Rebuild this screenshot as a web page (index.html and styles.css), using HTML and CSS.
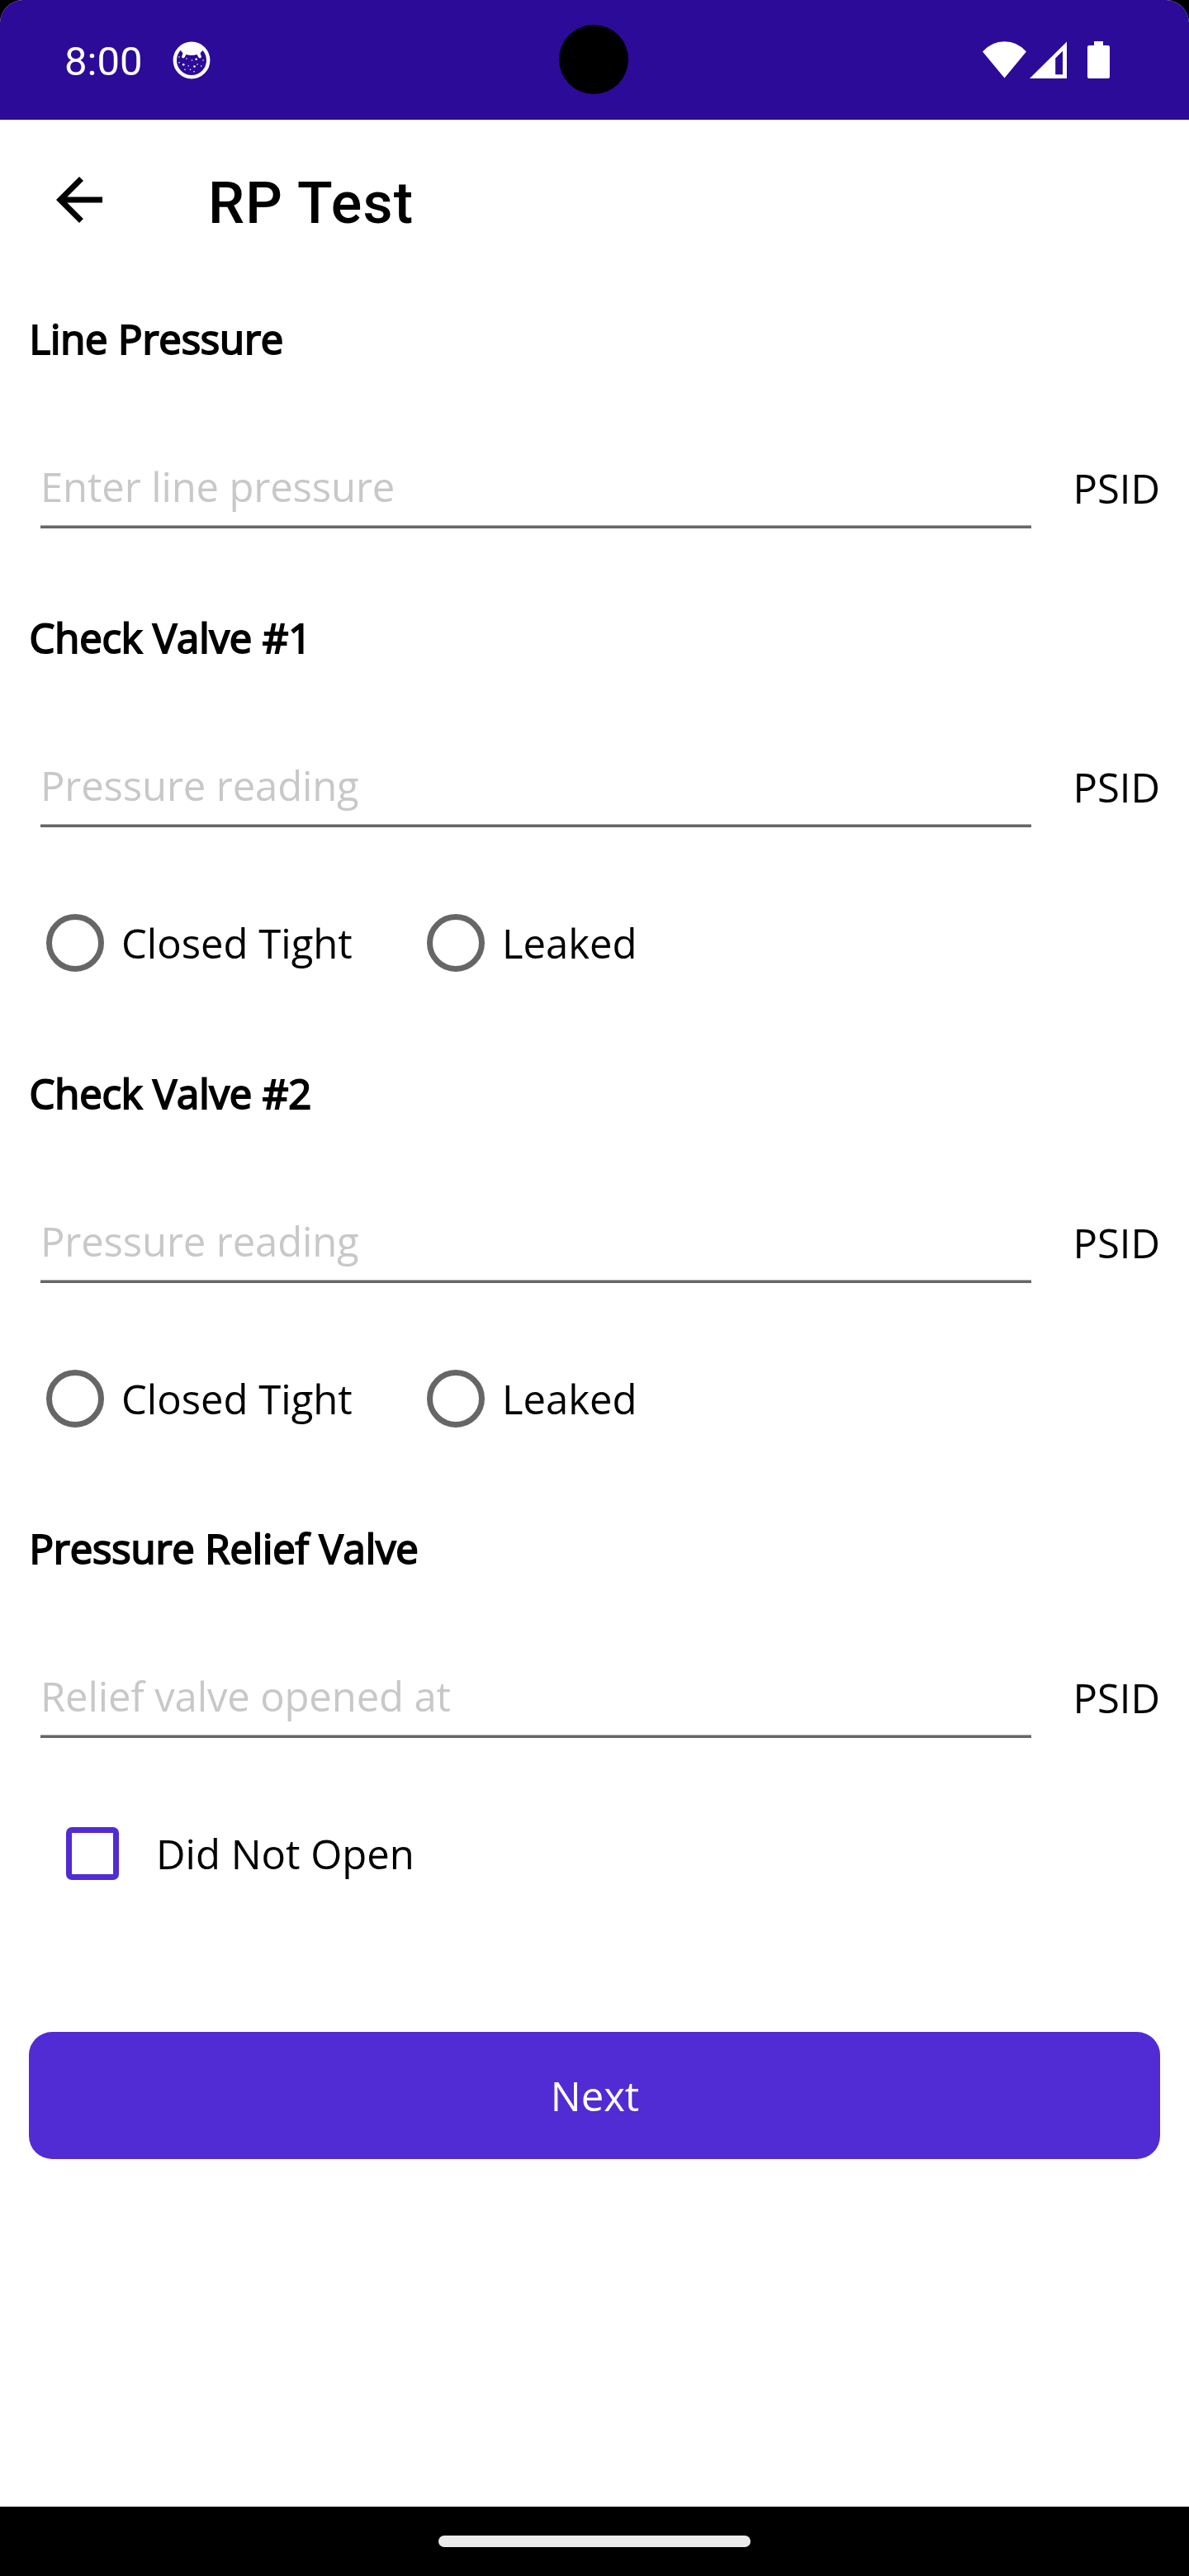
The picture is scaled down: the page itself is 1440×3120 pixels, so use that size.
FILE: index.html
```html
<!DOCTYPE html>
<html lang="en">
<head>
<meta charset="utf-8">
<title>RP Test</title>
<link rel="stylesheet" href="styles.css">
</head>
<body>
<div class="screen">
  <header class="status">
    <span class="clock">8:00</span>
    <svg class="notice" viewBox="0 0 46 46" width="46" height="46">
      <circle cx="23" cy="23" r="20.2" fill="none" stroke="#fff" stroke-width="4.4"/>
      <path d="M6 9Q13 1 23 1T40 9L36 11.500L33.500 14.500L35 19Q33.500 21.500 31.500 19.500L29.500 16Q23 18 16.500 16L14.500 19.500Q12.500 21.500 11 19L12.500 14.500L9 10Z" fill="#fff"/>
      <g fill="#fff">
        <circle cx="28.700" cy="21.700" r="1.300"/><circle cx="13.200" cy="28.300" r="1.300"/><circle cx="26.500" cy="30.500" r="1.300"/>
        <circle cx="8" cy="19" r=".8"/><circle cx="8" cy="25.700" r=".8"/><circle cx="17" cy="21" r=".8"/><circle cx="23.500" cy="23" r=".8"/>
        <circle cx="19.300" cy="29.700" r=".8"/><circle cx="15" cy="34.300" r=".8"/><circle cx="21.500" cy="34.300" r=".8"/><circle cx="26" cy="36.700" r=".8"/>
        <circle cx="30" cy="28" r=".8"/><circle cx="34.700" cy="30" r=".8"/><circle cx="37" cy="23" r=".8"/>
      </g>
    </svg>
    <span class="camera"></span>
    <svg class="signals" viewBox="0 0 156 46" width="156" height="46" fill="#fff">
      <path d="M0 12.500Q11 .3 26.500 .3T53 12.500L26.500 44.500Z"/>
      <path fill-rule="evenodd" d="M57 45L102 .5V45ZM88.200 20.500V40.300H97V11.700Z"/>
      <path d="M135 0H146V5H152Q154 5 154 7V43Q154 45 152 45H129Q127 45 127 43V7Q127 5 129 5H135Z"/>
    </svg>
  </header>
  <div class="appbar">
    <svg class="back" viewBox="0 0 16 16" width="56" height="56"><path d="M16 7H3.830L9.420 1.410L8 0L0 8L8 16L9.410 14.590L3.830 9H16Z"/></svg>
    <h1 class="title">RP Test</h1>
  </div>
  <main class="form">
    <section class="group">
      <h2 class="heading">Line Pressure</h2>
      <div class="field"><input class="entry" type="text" placeholder="Enter line pressure"><span class="unit">PSID</span></div>
    </section>
    <section class="group">
      <h2 class="heading">Check Valve #1</h2>
      <div class="field"><input class="entry" type="text" placeholder="Pressure reading"><span class="unit">PSID</span></div>
      <div class="options">
        <label class="option closed"><input class="radio" type="radio" name="valve1">Closed Tight</label>
        <label class="option"><input class="radio" type="radio" name="valve1">Leaked</label>
      </div>
    </section>
    <section class="group">
      <h2 class="heading">Check Valve #2</h2>
      <div class="field"><input class="entry" type="text" placeholder="Pressure reading"><span class="unit">PSID</span></div>
      <div class="options">
        <label class="option closed"><input class="radio" type="radio" name="valve2">Closed Tight</label>
        <label class="option"><input class="radio" type="radio" name="valve2">Leaked</label>
      </div>
    </section>
    <section class="group">
      <h2 class="heading">Pressure Relief Valve</h2>
      <div class="field"><input class="entry" type="text" placeholder="Relief valve opened at"><span class="unit">PSID</span></div>
      <label class="check"><input class="box" type="checkbox">Did Not Open</label>
    </section>
    <button class="next" type="button">Next</button>
  </main>
  <footer class="navbar"><span class="pill"></span></footer>
</div>
</body>
</html>
```
FILE: styles.css
```css
* { box-sizing: border-box; }
body { margin: 0; background: #000; }
.screen {
  width: 1440px; height: 3120px; overflow: hidden;
  display: flex; flex-direction: column;
  background: #fff; border-radius: 28px 28px 0 0;
  font: 49px/66px "Open Sans", sans-serif; color: #000;
}
.status {
  position: relative; flex: none; height: 145px; padding: 0 94px 0 78px;
  display: flex; align-items: center; background: #2b0b98;
}
.clock { font: 49px/58px Roboto, sans-serif; color: #fff; padding-top: 4px; width: 131px; }
.camera { position: absolute; left: 677px; top: 30px; width: 84px; height: 84px; border-radius: 50%; background: #000; }
.signals { margin-left: auto; }
.appbar { flex: none; height: 196px; padding-left: 68px; display: flex; align-items: center; }
.back { margin-bottom: 3px; }
.title { margin: 0 0 0 128px; padding-top: 6px; font: 500 70px/82px Roboto, sans-serif; letter-spacing: 1.2px; }
.form { flex: 1; padding: 36px 35px 0; }
.group { margin-bottom: 99px; }
.group:nth-child(2) { margin-bottom: 114px; }
.group:nth-child(3) { margin-bottom: 113px; }
.heading {
  margin: 0; padding-left: 0.5px;
  font-size: 49px; font-weight: 400; line-height: 66px; letter-spacing: -0.14px;
  -webkit-text-stroke: 2px #000;
}
.field { display: flex; justify-content: space-between; margin-top: 113px; padding-left: 14px; }
.entry {
  width: 1200px; height: 84px; padding: 0 0 18px; border: 0; outline: 0;
  font: inherit; letter-spacing: -0.14px; color: #000;
  background: linear-gradient(#a9a9a9 1px, #666 1px) bottom / 100% 4px no-repeat;
}
.entry::placeholder { color: #c8c8c8; opacity: 1; }
.unit { margin-top: 2px; }
.options { display: flex; margin-top: 105px; padding-left: 21px; }
.option { display: flex; align-items: center; height: 70px; }
.closed { width: 461px; }
.radio { appearance: none; width: 70px; height: 70px; margin: 0 21px 0 0; border: 7px solid #666; border-radius: 50%; }
.check { display: flex; align-items: center; margin-top: 107px; padding-left: 45px; height: 66px; }
.box { appearance: none; width: 64px; height: 64px; margin: 0 45px 0 0; border: 7px solid #512bd4; border-radius: 7px; }
.next {
  display: block; width: 1370px; height: 154px; padding: 0 0 0 1px; border: 0; border-radius: 28px;
  margin-top: 183px; background: #512bd4; color: #fff; font: inherit;
}
.navbar { flex: none; height: 84px; background: #000; display: flex; align-items: center; justify-content: center; }
.pill { width: 378px; height: 14px; border-radius: 7px; background: #ebebeb; }
```
